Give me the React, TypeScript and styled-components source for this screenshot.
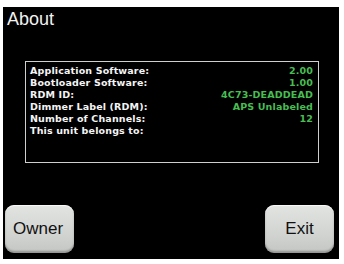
import styled, { createGlobalStyle } from "styled-components";

const GlobalStyle = createGlobalStyle`
  html, body {
    margin: 0;
    padding: 0;
    background: #ffffff;
  }
`;

const StyledFrame = styled.div`
  width: 344px;
  height: 264px;
  padding: 7px 5px 5px 3px;
  box-sizing: border-box;
  background: #ffffff;
`;

const StyledScreen = styled.div`
  height: 100%;
  background: #000000;
  display: flex;
  flex-direction: column;
  font-family: "Liberation Sans", Arial, sans-serif;
`;

const StyledTitle = styled.div`
  color: #f2f2f2;
  font-size: 18px;
  line-height: 20px;
  padding: 2px 0 0 4px;
`;

const StyledInfoBox = styled.div`
  margin: 32px 0 0 22px;
  width: 294px;
  height: 102px;
  box-sizing: border-box;
  border: 1px solid #cfcfcf;
  padding: 3px 5px 0 4px;
  display: flex;
  flex-direction: column;
`;

const StyledRow = styled.div`
  display: flex;
  justify-content: space-between;
  height: 12px;
  line-height: 12px;
  font-family: "DejaVu Sans", Verdana, sans-serif;
  font-weight: bold;
  font-size: 9.5px;
  letter-spacing: 0.15px;
`;

const StyledLabel = styled.span`
  color: #f4f4f4;
`;

const StyledValue = styled.span`
  color: #47bd52;
`;

const StyledButtonRow = styled.div`
  margin-top: auto;
  display: flex;
  justify-content: space-between;
  padding: 0 5px 6px 2px;
`;

const StyledButton = styled.button<{ $align: string }>`
  width: 69px;
  height: 48px;
  border: none;
  border-radius: 9px;
  background: linear-gradient(#e2e4e2, #d2d4d2 60%, #c4c6c4);
  box-shadow: inset 0 -2px 2px rgba(0, 0, 0, 0.25),
    inset 0 1px 1px rgba(255, 255, 255, 0.8);
  color: #111111;
  font-family: "Liberation Sans", Arial, sans-serif;
  font-size: 17px;
  padding: 0;
  text-align: ${(p) => p.$align};
  padding-left: ${(p) => (p.$align === "left" ? "8px" : "0")};
`;

const infoRows = [
  { label: "Application Software:", value: "2.00" },
  { label: "Bootloader Software:", value: "1.00" },
  { label: "RDM ID:", value: "4C73-DEADDEAD" },
  { label: "Dimmer Label (RDM):", value: "APS Unlabeled" },
  { label: "Number of Channels:", value: "12" },
  { label: "This unit belongs to:", value: "" },
];

const App = () => {
  return (
    <>
      <GlobalStyle />
      <StyledFrame>
        <StyledScreen>
          <StyledTitle>About</StyledTitle>
          <StyledInfoBox>
            {infoRows.map((row) => (
              <StyledRow key={row.label}>
                <StyledLabel>{row.label}</StyledLabel>
                <StyledValue>{row.value}</StyledValue>
              </StyledRow>
            ))}
          </StyledInfoBox>
          <StyledButtonRow>
            <StyledButton $align="left">Owner</StyledButton>
            <StyledButton $align="center">Exit</StyledButton>
          </StyledButtonRow>
        </StyledScreen>
      </StyledFrame>
    </>
  );
};

export default App;
